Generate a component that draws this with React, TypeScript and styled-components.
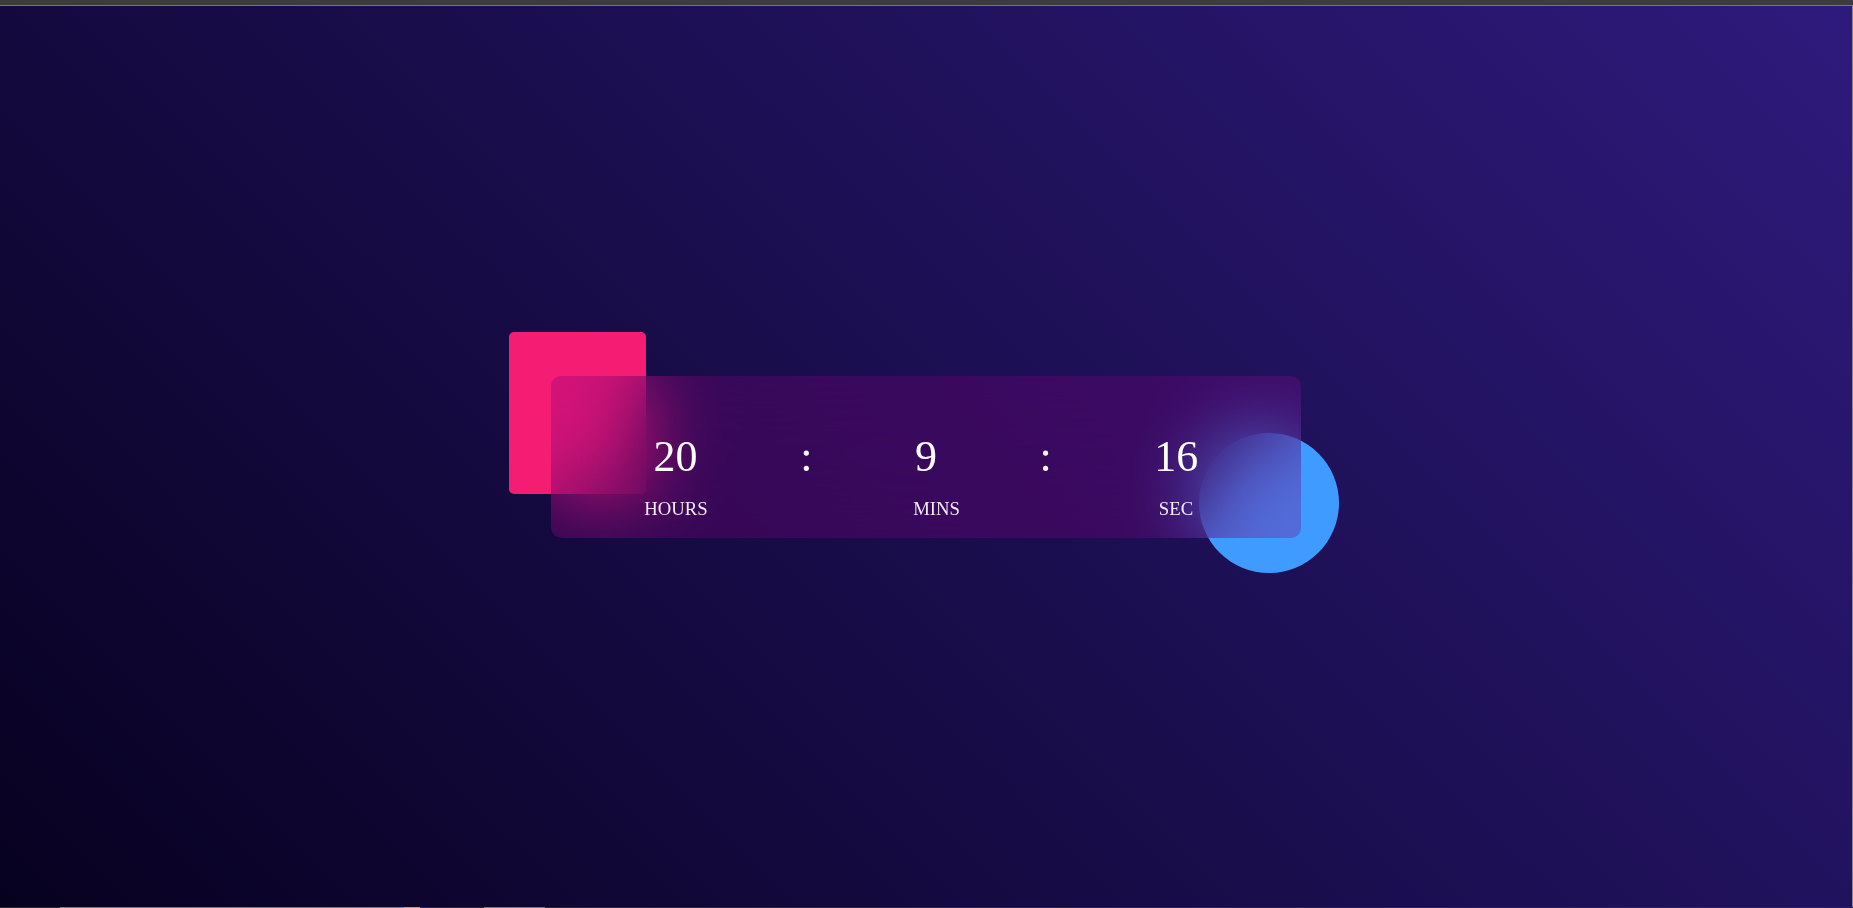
import React from "react";
import styled, { createGlobalStyle } from "styled-components";

const GlobalStyle = createGlobalStyle`
  html, body {
    margin: 0;
    padding: 0;
    width: 100%;
    height: 100%;
    overflow: hidden;
    background: #0b0326;
  }
  #root {
    width: 100%;
    height: 100%;
  }
  * { box-sizing: border-box; }
`;

const Frame = styled.div`
  display: flex;
  flex-direction: column;
  width: 100vw;
  height: 100vh;
  font-family: "Liberation Serif", "Times New Roman", serif;
`;

const TopBar = styled.div`
  flex: 0 0 6px;
  background: #3c3c3c;
  border-bottom: 1px solid #767676;
`;

const Main = styled.main`
  flex: 1;
  display: flex;
  align-items: center;
  justify-content: center;
  background: linear-gradient(45deg, #070120 0%, #2e1a7c 100%);
  border-right: 1px solid #8a8a8a;
`;

const BottomBar = styled.div`
  flex: 0 0 1px;
  display: flex;
  background: #2b2b2b;
`;

const BarSegment = styled.div<{ $w: number; $c: string }>`
  flex: 0 0 ${(p) => p.$w}px;
  background: ${(p) => p.$c};
`;

const Stage = styled.div`
  position: relative;
  width: 750px;
  height: 162px;
`;

const Square = styled.div`
  position: absolute;
  left: -42px;
  top: -44px;
  width: 137px;
  height: 162px;
  border-radius: 5px;
  background: #f51c74;
`;

const Circle = styled.div`
  position: absolute;
  left: 648px;
  top: 57px;
  width: 140px;
  height: 140px;
  border-radius: 50%;
  background: #3f9bff;
`;

const Card = styled.div`
  position: relative;
  width: 100%;
  height: 100%;
  border-radius: 10px;
  padding-top: 55px;
  background: rgba(128, 0, 128, 0.3);
  backdrop-filter: blur(40px);
  -webkit-backdrop-filter: blur(40px);
  color: #ffffff;
  display: flex;
  flex-direction: column;
`;

const Digits = styled.div`
  display: flex;
  justify-content: space-evenly;
  font-size: 44px;
  line-height: normal;
`;

const Value = styled.span``;

const Colon = styled.span``;

const Labels = styled.div`
  display: grid;
  grid-template-columns: repeat(3, 1fr);
  margin-top: 16px;
  font-size: 18.7px;
  line-height: normal;
  color: #f4eef8;
`;

const Label = styled.span<{ $shift?: number }>`
  text-align: center;
  padding-left: ${(p) => p.$shift ?? 0}px;
`;

export default function App() {
  const time = { hours: 20, mins: 9, sec: 16 };
  return (
    <>
      <GlobalStyle />
      <Frame>
        <TopBar />
        <Main>
          <Stage>
            <Square />
            <Circle />
            <Card>
              <Digits>
                <Value>{time.hours}</Value>
                <Colon>:</Colon>
                <Value>{time.mins}</Value>
                <Colon>:</Colon>
                <Value>{time.sec}</Value>
              </Digits>
              <Labels>
                <Label>HOURS</Label>
                <Label $shift={21}>MINS</Label>
                <Label>SEC</Label>
              </Labels>
            </Card>
          </Stage>
        </Main>
        <BottomBar>
          <BarSegment $w={60} $c="#2b2b2b" />
          <BarSegment $w={344} $c="#7a7a7a" />
          <BarSegment $w={16} $c="#e8953a" />
          <BarSegment $w={64} $c="#2b2b2b" />
          <BarSegment $w={61} $c="#7a7a7a" />
        </BottomBar>
      </Frame>
    </>
  );
}
